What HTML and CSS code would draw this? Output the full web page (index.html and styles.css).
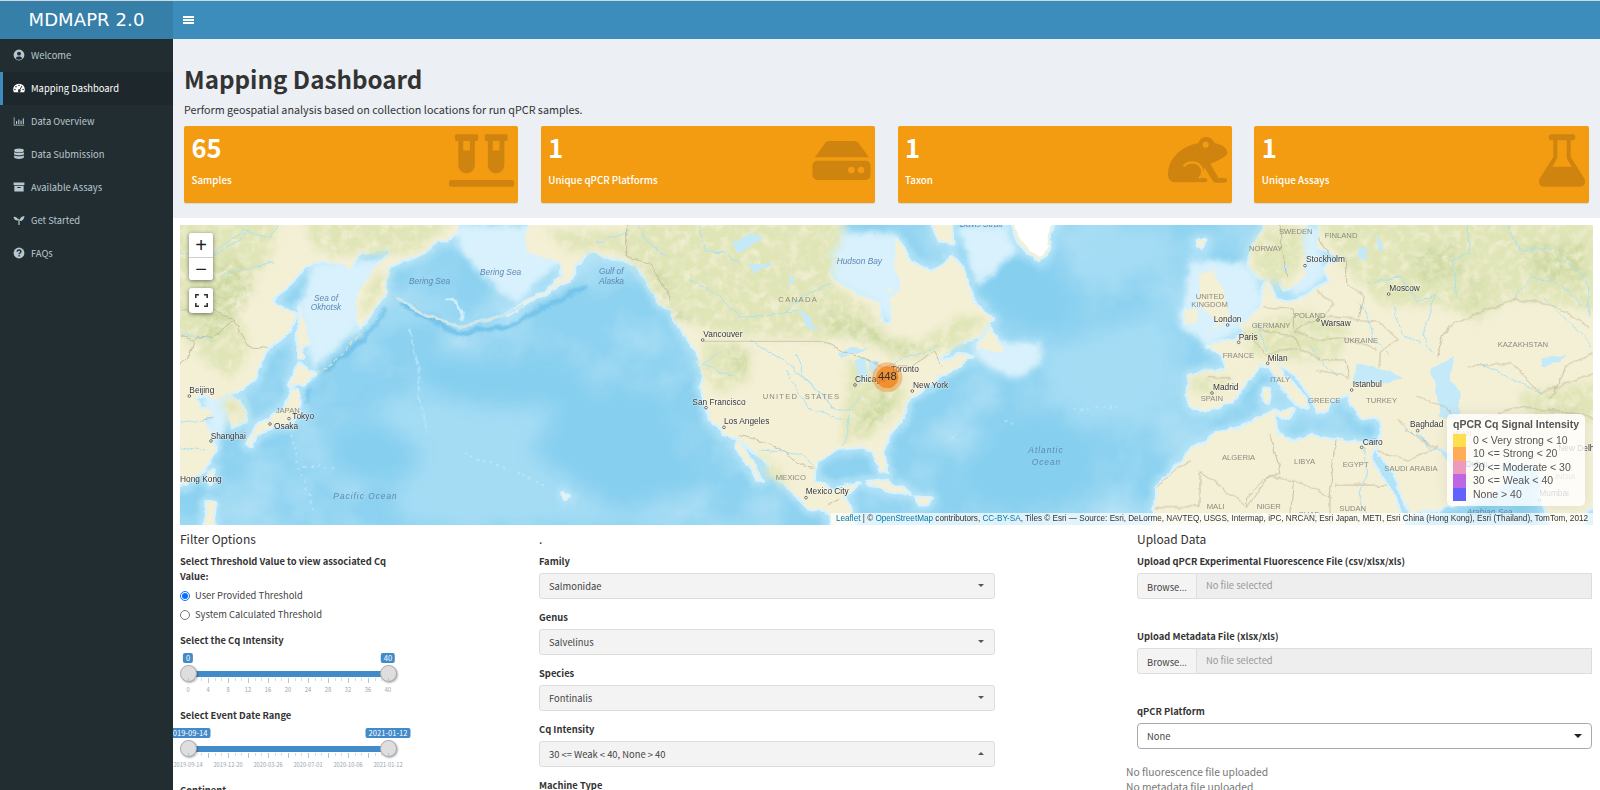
FILE: index.html
```html
<!DOCTYPE html>
<html lang="en">
<head>
<meta charset="utf-8">
<title>MDMAPR 2.0</title>
<link rel="stylesheet" href="styles.css">
</head>
<body>
<header class="topbar">
  <div class="logo">MDMAPR 2.0</div>
  <nav class="navbar">
    <svg class="burger" viewBox="0 0 11 8" width="11" height="8"><rect width="11" height="2" y="0"/><rect width="11" height="2" y="3"/><rect width="11" height="2" y="6"/></svg>
  </nav>
</header>
<div class="shell">
  <aside class="sidebar">
    <a class="side-item">
      <svg class="side-icon" viewBox="0 0 16 16"><path fill-rule="evenodd" d="M8 .8a7.2 7.2 0 1 0 0 14.400A7.200 7.200 0 0 0 8 .8zM8 3.600a2.600 2.600 0 1 1 0 5.200 2.600 2.600 0 0 1 0-5.200zM3.600 12.200C4.300 10.700 5.800 10 8 10s3.700.7 4.400 2.200A5.700 5.700 0 0 1 3.600 12.200z"/></svg>
      <span>Welcome</span></a>
    <a class="side-item active">
      <svg class="side-icon" viewBox="0 0 16 16"><path fill-rule="evenodd" d="M8 2.200A7.800 7.800 0 0 0 .2 10c0 1.400.4 2.700 1 3.800h13.600c.6-1.100 1-2.400 1-3.800A7.800 7.800 0 0 0 8 2.200zM8 3.600a1 1 0 1 1 0 2 1 1 0 0 1 0-2zM4 5.200a1 1 0 1 1 0 2 1 1 0 0 1 0-2zM2.600 9a1 1 0 1 1 0 2 1 1 0 0 1 0-2zM13.400 9a1 1 0 1 1 0 2 1 1 0 0 1 0-2zM11.500 5l.9.500-2.700 4.800a1.800 1.800 0 1 1-.9-.5z"/></svg>
      <span>Mapping Dashboard</span></a>
    <a class="side-item">
      <svg class="side-icon" viewBox="0 0 16 16"><path d="M1 3h1v10h13v1H1z"/><rect x="4" y="8" width="1.500" height="4"/><rect x="7" y="6" width="1.500" height="6"/><rect x="10" y="7.500" width="1.500" height="4.500"/><rect x="13" y="4.500" width="1.500" height="7.500"/></svg>
      <span>Data Overview</span></a>
    <a class="side-item">
      <svg class="side-icon" viewBox="0 0 16 16"><ellipse cx="8" cy="3.300" rx="6.500" ry="2.600"/><path d="M1.500 5.200C3 7 13 7 14.500 5.200v3C13 10 3 10 1.500 8.200z"/><path d="M1.500 9.700C3 11.500 13 11.500 14.500 9.700v3.100C13 15.300 3 15.300 1.500 12.800z"/></svg>
      <span>Data Submission</span></a>
    <a class="side-item">
      <svg class="side-icon" viewBox="0 0 16 16"><rect x=".8" y="2" width="14.400" height="3.400"/><path fill-rule="evenodd" d="M1.800 6.400h12.400V14H1.800zM5.800 8v1.200h4.400V8z"/></svg>
      <span>Available Assays</span></a>
    <a class="side-item">
      <svg class="side-icon" viewBox="0 0 16 16"><path d="M.8 3.500c3.500 0 6 1.600 6.400 5.200v5.800h1.600V8.700C9.300 5 11.500 2.700 15.200 2.500 15.200 6.500 13 9 9.300 9.300 9 7.900 8.500 7 7.500 6.100 6.800 8 6.400 8.700 6 8.700 2.900 8.700.8 6.500.8 3.500z"/></svg>
      <span>Get Started</span></a>
    <a class="side-item">
      <svg class="side-icon" viewBox="0 0 16 16"><circle cx="8" cy="8" r="7.200"/><path class="icon-cut" d="M5.500 6.300C5.600 4.800 6.700 4 8.100 4c1.500 0 2.500.9 2.500 2.100 0 1.800-2.500 1.900-2.500 3.500"/><circle class="icon-hole" cx="8.100" cy="11.800" r="1.100"/></svg>
      <span>FAQs</span></a>
  </aside>

  <main class="content">
    <section class="page-head">
      <h1 class="page-title">Mapping Dashboard</h1>
      <p class="page-sub">Perform geospatial analysis based on collection locations for run qPCR samples.</p>
      <div class="boxes">
        <div class="vbox">
          <div class="vnum">65</div><div class="vlabel">Samples</div>
          <svg class="vicon vicon-vials" viewBox="147 72 196 158"><path fill-rule="evenodd" d="M169 72h62a4 4 0 0 1 4 4v12a4 4 0 0 1-4 4h-6v73a25 25 0 0 1-50 0V92h-6a4 4 0 0 1-4-4V76a4 4 0 0 1 4-4zM190 92v29h20V92zM259 72h61a4 4 0 0 1 4 4v12a4 4 0 0 1-4 4h-6v73a25 25 0 0 1-50 0V92h-5a4 4 0 0 1-4-4V76a4 4 0 0 1 4-4zM279 92v29h20V92z"/><rect x="147" y="210" width="196" height="20" rx="5"/></svg>
        </div>
        <div class="vbox">
          <div class="vnum">1</div><div class="vlabel">Unique qPCR Platforms</div>
          <svg class="vicon vicon-hdd" viewBox="1237 92 176 118"><path d="M1288 92h76c6 0 11 3 14 8l30 41h-164l30-41c3-5 8-8 14-8z"/><path fill-rule="evenodd" d="M1252 152h146a15 15 0 0 1 15 15v28a15 15 0 0 1-15 15h-146a15 15 0 0 1-15-15v-28a15 15 0 0 1 15-15zM1355 170a10 10 0 1 0 0 20 10 10 0 0 0 0-20zM1384 170a10 10 0 1 0 0 20 10 10 0 0 0 0-20z"/></svg>
        </div>
        <div class="vbox">
          <div class="vnum">1</div><div class="vlabel">Taxon</div>
          <svg class="vicon vicon-frog" viewBox="207 82 180 138"><path fill-rule="evenodd" d="M298 100c4-12 14-18 24-18 11 0 20 7 25 18 22 5 38 15 38 30 0 10-26 22-51 33l25 42h17c11 0 11 14 0 14h-26c-4 0-6-2-8-4l-26-42c-2 14-8 24-17 32h18c11 0 11 13 0 13h-90c-12 0-20-9-20-24 0-50 43-85 91-94zM320 96a9 9 0 1 0 0 18 9 9 0 0 0 0-18z"/><path class="vcut" d="M254 170c13-17 44-17 54 6 4 12 0 24-8 30"/></svg>
        </div>
        <div class="vbox">
          <div class="vnum">1</div><div class="vlabel">Unique Assays</div>
          <svg class="vicon vicon-flask" viewBox="1317 72 138 158"><path fill-rule="evenodd" d="M1355 72h62a8 8 0 0 1 0 18h-5v50l39 62c10 14 2 28-12 28h-106c-14 0-22-14-12-28l39-62V90h-5a8 8 0 0 1 0-18zM1372 90v54l-15 26h58l-15-26V90z"/></svg>
        </div>
      </div>
    </section>

    <section class="panel">
      <div class="map">
        <svg class="map-svg" viewBox="180 225 1413 300" width="1413" height="300">
          <defs>
            <filter id="rough" filterUnits="userSpaceOnUse" x="150" y="195" width="1473" height="360">
              <feTurbulence type="fractalNoise" baseFrequency=".07" numOctaves="4" seed="7" result="n"/>
              <feDisplacementMap in="SourceGraphic" in2="n" scale="7" xChannelSelector="R" yChannelSelector="G"/>
              <feGaussianBlur stdDeviation=".35"/>
            </filter>
            <filter id="soft" filterUnits="userSpaceOnUse" x="150" y="195" width="1473" height="360"><feGaussianBlur stdDeviation="0.5"/></filter>
            <filter id="blur3" filterUnits="userSpaceOnUse" x="150" y="195" width="1473" height="360"><feGaussianBlur stdDeviation="3"/></filter>
            <filter id="blur6" filterUnits="userSpaceOnUse" x="150" y="195" width="1473" height="360"><feGaussianBlur stdDeviation="10"/></filter>
            <filter id="mott" filterUnits="userSpaceOnUse" x="150" y="195" width="1473" height="360">
              <feGaussianBlur in="SourceGraphic" stdDeviation="4" result="b"/>
              <feTurbulence type="fractalNoise" baseFrequency=".1" numOctaves="3" seed="4"/>
              <feColorMatrix type="matrix" values="0 0 0 0 0  0 0 0 0 0  0 0 0 0 0  2.200 0 0 0 -.2" result="n"/>
              <feComposite in="b" in2="n" operator="in"/>
            </filter>
            <filter id="mott2" filterUnits="userSpaceOnUse" x="150" y="195" width="1473" height="360">
              <feGaussianBlur in="SourceGraphic" stdDeviation="4" result="b"/>
              <feTurbulence type="fractalNoise" baseFrequency=".14" numOctaves="3" seed="9"/>
              <feColorMatrix type="matrix" values="0 0 0 0 0  0 0 0 0 0  0 0 0 0 0  2.400 0 0 0 -.7" result="n"/>
              <feComposite in="b" in2="n" operator="in"/>
            </filter>
            <filter id="clouds" filterUnits="userSpaceOnUse" x="180" y="225" width="1413" height="300">
              <feTurbulence type="fractalNoise" baseFrequency=".014" numOctaves="4" seed="11"/>
              <feColorMatrix type="matrix" values="0 0 0 0 .78  0 0 0 0 .92  0 0 0 0 .99  .9 0 0 0 -.34"/>
            </filter>
            <g id="land">
              <g transform="translate(170 220) scale(.33333)">
                <path d="M-40 -40L860 -40L865 45L800 65L750 105L700 118L662 140L640 180L650 215L610 270L572 322L560 290L562 225L590 170L640 125L668 88L620 82L565 105L540 140L480 125L430 125L385 160L345 205L305 240L335 262L375 285L360 330L320 370L290 385L250 480L215 505L165 530L130 540L105 520L70 535L95 565L135 572L100 600L125 640L130 690L105 750L50 790L-40 810Z"/>
                <path d="M170 535L210 545L228 600L190 618L172 570Z"/>
                <path d="M388 262L400 300L418 368L395 385L400 415L385 415L388 340Z"/>
                <path d="M380 435L410 455L438 460L405 490L375 490L360 500Z"/>
                <path d="M362 508L382 510L388 545L385 590L345 612L300 625L262 640L240 652L255 625L305 590L350 565Z"/>
                <path d="M240 655L255 650L245 680L232 672Z"/>
                <path d="M120 755L130 755L122 790L112 780Z"/>
                <path d="M110 845L135 850L130 890L150 960L105 960Z"/>
                <path d="M1178 822L1195 830L1188 842Z"/>
              </g>
              <g transform="translate(670 220) scale(.33333)">
                <path d="M-390 -40L-440 50L-430 90L-390 110L-330 130L-320 165L-370 210L-440 250L-490 285L-390 225L-310 180L-270 130L-250 95L-210 100L-160 115L-100 130L-60 190L-30 250L0 265L35 325L70 380L100 440L95 500L110 570L160 640L205 655L262 700L300 745L360 805L415 860L480 880L490 960L560 960L540 860L520 830L565 790L490 810L430 780L435 720L500 690L570 682L610 692L632 752L648 755L640 700L650 650L700 590L712 540L750 512L790 480L830 460L905 410L870 405L820 420L800 420L860 370L925 350L965 300L905 235L870 140L845 108L790 160L725 130L680 55L668 140L695 205L662 240L665 312L640 318L625 250L560 220L495 185L465 130L480 80L530 -40Z"/>
                <path d="M205 655L240 720L275 785L235 740L200 680Z"/>
                <path d="M770 -40L830 -40L850 70L810 60Z"/>
                <path d="M920 385L960 320L1000 400L965 390Z"/>
                <path d="M590 790L650 783L725 822L670 815L620 800Z"/>
                <path d="M740 830L785 835L770 850L745 845Z"/>
                <path d="M650 205L670 205L665 222Z"/>
                <path d="M1012 -40L1045 70L1110 125L1125 100L1165 -40Z"/>
              </g>
              <g transform="translate(1150 220) scale(.33333)">
                <path d="M385 -40L340 40L300 85L300 130L320 170L350 175L385 165L405 205L445 190L470 170L460 110L455 50L480 -40L510 -40L510 50L505 80L560 105L620 110L540 130L520 150L545 185L500 205L460 235L420 245L390 250L370 230L355 180L340 190L340 240L330 260L290 300L270 315L285 340L250 360L175 375L215 400L225 450L120 465L115 555L170 575L240 545L285 490L335 430L360 440L400 500L445 555L470 560L460 525L400 470L385 425L440 470L480 520L500 575L530 570L540 540L600 520L600 555L640 590L700 600L685 695L730 760L780 880L785 885L890 860L1000 830L1080 775L1045 735L970 750L900 735L855 680L920 715L1020 725L1150 730L1180 780L1170 830L1220 960L1300 960L1305 870L1400 840L1400 -40Z"/>
                <path d="M150 165L195 150L210 190L240 290L170 340L200 310L145 250Z"/>
                <path d="M105 265L145 270L140 310L105 310Z"/>
                <path d="M140 58L165 58L160 85L145 80Z"/>
                <path d="M345 510L360 510L355 545L345 540Z"/>
                <path d="M375 580L430 570L420 600Z"/>
              </g>
              <g transform="translate(1100 400) scale(.33333)">
                <path d="M160 420L170 265L232 200L275 150L360 100L450 75L490 45L525 35L530 95L580 130L640 105L700 120L780 130L830 135L810 170L870 270L905 345L925 420Z"/>
              </g>
            </g>
          </defs>

          <rect class="ocean" x="180" y="225" width="1413" height="300"/>
          <rect class="clouds" x="180" y="225" width="1413" height="300" filter="url(#clouds)"/>

          <g filter="url(#rough)">
          <g class="depth" filter="url(#blur6)">
            <g transform="translate(170 220) scale(.33333)">
              <path class="d-light" d="M620 560L900 500L1300 620L1500 560L1500 915L700 915Z"/>
              <path class="d-deep" d="M720 380L1000 430L1240 430L1280 560L950 560L760 520Z"/>
              <path class="d-deep" d="M450 620L650 610L760 700L700 790L500 770Z"/>
            </g>
            <g transform="translate(670 220) scale(.33333)">
              <path class="d-deep" d="M900 40L1080 60L1240 250L1180 360L1020 300L900 200Z"/>
              <path class="d-deep" d="M1000 580L1250 620L1300 800L1000 880L850 780Z"/>
              <path class="d-light" d="M1100 400L1500 260L1500 560L1250 620L1150 520Z"/>
              <path class="d-light" d="M1180 20L1500 20L1500 130L1260 200Z"/>
              <path class="d-deep" d="M-300 500L0 540L80 800L-150 880L-420 700Z"/>
            </g>
          </g>
          <g class="trench" filter="url(#blur3)" transform="translate(170 220) scale(.33333)">
            <path d="M650 262L590 345L420 495L395 620L395 760"/>
            <path d="M690 250L860 340L1010 320L1250 200"/>
          </g>
          <use class="shelf-a" href="#land" filter="url(#blur3)"/>
          <g class="shelf-fill" filter="url(#blur3)">
            <g transform="translate(170 220) scale(.33333)">
              <path d="M430 130L640 120L570 320L430 450L385 260Z"/>
              <path d="M860 15L1110 15L1170 130L1040 250L960 190L880 110L860 60Z"/>
              <path d="M100 530L190 510L160 640L130 690Z"/>
            </g>
            <g transform="translate(670 220) scale(.33333)">
              <path d="M465 130L480 30L680 40L700 200L660 320L620 250L500 190Z"/>
              <path d="M900 370L1115 365L1115 430L1040 480L930 430Z"/>
              <path d="M860 15L1010 15L1040 100L920 200Z"/>
            </g>
            <g transform="translate(1150 220) scale(.33333)">
              <path d="M120 120L300 130L345 240L270 330L180 380L90 320Z"/>
              <path d="M460 20L510 20L520 180L440 230L420 200Z"/>
            </g>
          </g>
          <use class="shelf-b" href="#land" filter="url(#soft)"/>
          <use class="land-base" href="#land"/>

          <g class="green" filter="url(#mott)">
            <g transform="translate(170 220) scale(.33333)">
              <path d="M-10 -10L330 -10L300 120L180 250L230 340L240 400L180 480L100 420L-10 300Z"/>
              <path d="M150 530L210 550L220 600L180 610Z"/>
              <path d="M1370 -10L1500 -10L1500 220L1400 130Z"/>
              <path d="M400 -10L860 -10L740 100L660 100L560 100L500 110L430 90Z"/>
              <path d="M600 180L650 150L640 210L590 280L570 280Z"/>
            </g>
            <g transform="translate(670 220) scale(.33333)">
              <path d="M0 -10L530 -10L480 190L600 270L640 340L750 370L870 280L960 300L860 380L700 420L560 350L450 360L250 350L100 330L40 280L-60 190Z"/>
              <path d="M530 420L700 470L700 560L600 650L510 670L530 520Z"/>
              <path d="M100 360L240 390L240 480L150 520L100 470Z"/>
              <path d="M260 690L330 750L360 810L300 770Z"/>
              <path d="M-380 30L-100 30L-60 150L-180 90L-300 100Z"/>
            </g>
            <g transform="translate(1150 220) scale(.33333)">
              <path d="M500 -10L1350 -10L1350 280L1100 230L980 300L880 260L700 260L600 160L560 110Z"/>
              <path d="M280 330L450 270L600 320L560 420L400 420L300 400Z"/>
              <path d="M300 90L380 -10L460 30L460 130L400 200L330 170Z"/>
              <path d="M1100 520L1350 480L1350 600L1150 600Z"/>
              <path d="M120 470L250 470L200 520L130 520Z"/>
            </g>
          </g>
          <g class="green-dark" filter="url(#mott2)">
            <g transform="translate(170 220) scale(.33333)">
              <path d="M100 150L200 100L260 200L190 300L120 380L90 280Z"/>
              <path d="M1420 130L1500 170L1500 230L1450 190Z"/>
            </g>
            <g transform="translate(670 220) scale(.33333)">
              <path d="M460 260L620 320L650 370L780 380L700 410L560 350L470 330Z"/>
              <path d="M170 370L240 400L230 470L180 450Z"/>
              <path d="M560 580L660 500L670 570L580 640Z"/>
              <path d="M-60 200L30 260L80 300L30 310Z"/>
            </g>
            <g transform="translate(1150 220) scale(.33333)">
              <path d="M960 170L1000 180L990 270L965 310Z"/>
              <path d="M760 110L900 60L940 150L840 200Z"/>
              <path d="M1120 80L1300 60L1310 200L1160 180Z"/>
            </g>
          </g>
          <g class="ice" transform="translate(670 220) scale(.33333)">
            <path d="M1020 -40L1050 62L1108 112L1120 96L1165 -40Z"/>
          </g>

          <g class="water">
            <g transform="translate(670 220) scale(.33333)">
              <path d="M500 400L545 385L600 385L555 400L510 415Z"/>
              <path d="M555 425L590 410L590 470L570 490Z"/>
              <path d="M595 415L625 425L615 465L600 455Z"/>
              <path d="M385 265L420 285L440 335L410 320Z"/>
              <path d="M185 65L250 40L280 55L205 100Z"/>
              <path d="M230 135L310 130L250 160Z"/>
              <path d="M360 170L375 170L355 205Z"/>
            </g>
            <g transform="translate(1150 220) scale(.33333)">
              <path d="M620 430L680 440L760 475L720 490L610 490Z"/>
              <path d="M840 440L915 410L900 470L925 510L930 600L870 590L860 520Z"/>
              <path d="M1175 415L1250 405L1230 425L1180 440Z"/>
              <path d="M620 85L655 75L650 120L625 115Z"/>
              <path d="M675 45L700 85L680 90Z"/>
              <path d="M395 140L415 135L410 160Z"/>
            </g>
            <g transform="translate(1100 400) scale(.33333)">
              <path d="M1000 140L1050 170L1105 210L1060 200Z"/>
            </g>
          </g>

          <g class="rivers">
            <g transform="translate(170 220) scale(.33333)">
              <path d="M130 100L220 30L300 55L330 15"/>
              <path d="M145 170L250 140L310 125"/>
              <path d="M30 100L140 105L240 35"/>
              <path d="M30 340L130 360"/>
              <path d="M30 680L100 690M30 610L100 600"/>
              <path d="M1400 15L1440 80L1500 110"/>
              <path d="M1380 30L1280 70"/>
            </g>
            <g transform="translate(670 220) scale(.33333)">
              <path d="M240 360L340 420L420 490L500 570L540 570L575 530"/>
              <path d="M380 400L400 470L500 570"/>
              <path d="M540 580L530 650L520 680"/>
              <path d="M60 180L130 215L210 290L280 290L385 270"/>
              <path d="M640 440L800 380"/>
              <path d="M350 450L410 560L520 600"/>
              <path d="M90 20L110 100L170 100L210 130"/>
              <path d="M480 190L400 230L340 280"/>
              <path d="M270 690L390 700L430 740"/>
              <path d="M140 400L100 430L190 470"/>
            </g>
            <g transform="translate(1150 220) scale(.33333)">
              <path d="M950 15L960 100L910 120L920 230"/>
              <path d="M1070 15L1110 90L1210 90L1310 180L1320 290"/>
              <path d="M650 190L750 170L800 240L860 230L815 350L850 400"/>
              <path d="M625 250L660 300L670 360L720 400"/>
              <path d="M730 260L760 340L810 370"/>
              <path d="M1090 240L1140 170L1230 190L1300 260"/>
              <path d="M990 430L1100 480L1170 520"/>
              <path d="M1180 230L1230 280L1330 380"/>
              <path d="M320 310L350 390M480 380L560 470"/>
            </g>
            <g transform="translate(1100 400) scale(.33333)">
              <path d="M790 140L800 220L780 280L800 340L790 375"/>
              <path d="M920 90L985 130M950 100L1000 150"/>
            </g>
          </g>

          <g class="borders">
            <g transform="translate(170 220) scale(.33333)">
              <path d="M1370 15L1370 110L1440 130L1500 240"/>
              <path d="M30 270L130 270L190 300L240 380L290 385"/>
              <path d="M30 345L70 360L50 420L30 435"/>
              <path d="M100 600L130 595M70 355L130 350L190 300"/>
            </g>
            <g transform="translate(670 220) scale(.33333)">
              <path d="M205 650L280 665L340 690L400 740L430 745"/>
              <path d="M470 860L510 840"/>
              <path d="M460 362L520 395L600 420L640 440L720 440L790 395L815 440"/>
            </g>
            <g transform="translate(1150 220) scale(.33333)">
              <path d="M890 320L1100 235L1220 260L1320 320"/>
              <path d="M860 410L890 320"/>
              <path d="M950 440L1080 430L1170 520L1330 460"/>
              <path d="M520 290L680 300L745 360L690 400L690 440"/>
              <path d="M430 330L520 290L550 250L500 210"/>
              <path d="M340 260L430 270L430 330L500 360L570 350L680 390"/>
              <path d="M330 330L430 345L450 390L520 420L590 420L600 470L500 450"/>
              <path d="M285 340L320 370L345 400L440 390"/>
              <path d="M170 470L240 470"/>
              <path d="M590 110L590 190L640 230L625 290"/>
              <path d="M510 50L540 110M385 15L395 70L410 170"/>
              <path d="M800 530L880 560L930 610L1020 590L1120 560L1330 590"/>
              <path d="M1330 400L1250 440L1200 540"/>
              <path d="M740 600L810 660L860 680"/>
            </g>
            <g transform="translate(1100 400) scale(.33333)">
              <path d="M275 185L235 200L170 265"/>
              <path d="M300 215L440 320L510 225L540 220L510 100"/>
              <path d="M300 215L300 320L170 320"/>
              <path d="M440 320L440 290L510 225"/>
              <path d="M580 240L690 290L705 120"/>
              <path d="M705 255L860 255"/>
              <path d="M510 225L580 240L570 375"/>
              <path d="M690 290L690 375"/>
              <path d="M835 155L930 180L1010 140"/>
              <path d="M1050 195L1190 310"/>
            </g>
          </g>

          <g class="specks" filter="url(#soft)">
            <g transform="translate(170 220) scale(.33333)">
              <path class="sp-shallow" d="M680 232C720 262 780 300 860 318C930 315 1000 290 1060 255"/>
              <path class="sp-tan" d="M680 232C720 262 780 300 860 318C930 315 1000 290 1060 255"/>
              <path class="sp-tan" d="M440 460L500 420L570 340"/>
              <path class="sp-white" d="M716 330L745 440L750 520L760 590L770 640"/>
              <path class="sp-white2" d="M880 700L1000 745L1130 800"/>
              <path class="sp-white2" d="M360 640L390 760L440 880M400 740L500 745"/>
              <path class="sp-eddy" d="M825 240C870 235 885 270 872 300"/>
            </g>
            <g transform="translate(670 220) scale(.33333)">
              <path class="sp-white2" d="M1000 600L1030 610M1210 570L1350 560M840 650L860 640"/>
            </g>
          </g>
          </g>

          <g class="line-straight" transform="translate(670 220) scale(.33333)">
            <path d="M100 364L460 364"/>
          </g>

          <g class="labels">
            <g transform="translate(170 220) scale(.33333)">
              <text class="sea" x="717" y="191">Bering Sea</text>
              <text class="sea" x="930" y="165">Bering Sea</text>
              <text class="sea" x="1287" y="163">Gulf of</text>
              <text class="sea" x="1287" y="191">Alaska</text>
              <text class="sea" x="432" y="242">Sea of</text>
              <text class="sea" x="422" y="269">Okhotsk</text>
              <text class="sea wide" x="490" y="837">Pacific Ocean</text>
              <text class="country" x="317" y="579">JAPAN</text>
              <text class="city" x="58" y="519">Beijing</text><circle class="dot" cx="58" cy="528" r="4"/>
              <text class="city" x="367" y="598">Tokyo</text><circle class="dot" cx="357" cy="596" r="4"/>
              <text class="city" x="312" y="627">Osaka</text><circle class="dot" cx="300" cy="612" r="4"/>
              <text class="city" x="122" y="656">Shanghai</text><circle class="dot" cx="123" cy="663" r="4"/>
              <text class="city" x="30" y="785">Hong Kong</text>
            </g>
            <g transform="translate(670 220) scale(.33333)">
              <text class="sea" x="500" y="131">Hudson Bay</text>
              <text class="sea" x="870" y="20">Davis Strait</text>
              <text class="country wide2" x="325" y="246">CANADA</text>
              <text class="country wide3" x="278" y="536">UNITED  STATES</text>
              <text class="country" x="317" y="779">MEXICO</text>
              <text class="city" x="100" y="350">Vancouver</text><circle class="dot" cx="98" cy="360" r="4"/>
              <text class="city" x="555" y="486">Chicago</text><circle class="dot" cx="555" cy="495" r="4"/>
              <text class="city" x="663" y="456">Toronto</text>
              <text class="city" x="729" y="505">New York</text><circle class="dot" cx="727" cy="513" r="4"/>
              <text class="city" x="67" y="554">San Francisco</text><circle class="dot" cx="108" cy="563" r="4"/>
              <text class="city" x="162" y="613">Los Angeles</text><circle class="dot" cx="162" cy="622" r="4"/>
              <text class="city" x="407" y="822">Mexico City</text><circle class="dot" cx="408" cy="833" r="4"/>
              <text class="sea wide" x="1075" y="698">Atlantic</text>
              <text class="sea wide" x="1085" y="736">Ocean</text>
              <circle class="cluster-out" cx="652" cy="472" r="45"/>
              <circle class="cluster-in" cx="652" cy="472" r="33"/>
              <text class="cluster-text" x="652" y="481">448</text>
            </g>
            <g transform="translate(1150 220) scale(.33333)">
              <text class="country" x="387" y="41">SWEDEN</text>
              <text class="country" x="524" y="55">FINLAND</text>
              <text class="country" x="297" y="93">NORWAY</text>
              <text class="country" x="137" y="237">UNITED</text>
              <text class="country" x="124" y="262">KINGDOM</text>
              <text class="country" x="432" y="293">POLAND</text>
              <text class="country" x="305" y="323">GERMANY</text>
              <text class="country" x="582" y="368">UKRAINE</text>
              <text class="country" x="1043" y="381">KAZAKHSTAN</text>
              <text class="country" x="218" y="415">FRANCE</text>
              <text class="country" x="360" y="485">ITALY</text>
              <text class="country" x="152" y="543">SPAIN</text>
              <text class="country" x="474" y="549">GREECE</text>
              <text class="country" x="648" y="550">TURKEY</text>
              <text class="city" x="468" y="127">Stockholm</text><circle class="dot" cx="465" cy="137" r="4"/>
              <text class="city" x="718" y="213">Moscow</text><circle class="dot" cx="716" cy="222" r="4"/>
              <text class="city" x="191" y="306">London</text><circle class="dot" cx="233" cy="315" r="4"/>
              <text class="city" x="513" y="319">Warsaw</text><circle class="dot" cx="504" cy="300" r="4"/>
              <text class="city" x="266" y="359">Paris</text><circle class="dot" cx="266" cy="367" r="4"/>
              <text class="city" x="353" y="422">Milan</text><circle class="dot" cx="353" cy="430" r="4"/>
              <text class="city" x="189" y="510">Madrid</text><circle class="dot" cx="186" cy="519" r="4"/>
              <text class="city" x="608" y="501">Istanbul</text><circle class="dot" cx="605" cy="510" r="4"/>
            </g>
            <g transform="translate(1100 400) scale(.33333)">
              <text class="country" x="366" y="179">ALGERIA</text>
              <text class="country" x="582" y="192">LIBYA</text>
              <text class="country" x="728" y="201">EGYPT</text>
              <text class="country" x="853" y="212">SAUDI ARABIA</text>
              <text class="country" x="320" y="326">MALI</text>
              <text class="country" x="470" y="326">NIGER</text>
              <text class="country" x="718" y="334">SUDAN</text>
              <text class="country" x="595" y="352">CHAD</text>
              <text class="country" x="1060" y="107">IRAN</text>
              <text class="country" x="1365" y="237">INDIA</text>
              <text class="city" x="930" y="82">Baghdad</text><circle class="dot" cx="953" cy="92" r="4"/>
              <text class="city" x="788" y="134">Cairo</text><circle class="dot" cx="785" cy="142" r="4"/>
              <text class="city" x="1097" y="201">Dubai</text>
              <text class="city" x="1375" y="153">New Delhi</text>
              <text class="city" x="1318" y="289">Mumbai</text><circle class="dot" cx="1318" cy="300" r="4"/>
              <text class="sea" x="1100" y="346">Arabian Sea</text>
            </g>
          </g>
        </svg>

        <div class="zoomctl">
          <button class="zbtn">+</button>
          <button class="zbtn">−</button>
        </div>
        <div class="fullscreen">
          <svg viewBox="0 0 13 13" width="13" height="13"><path d="M.8 4V.8H4M9 .8h3.200V4M12.200 9v3.200H9M4 12.200H.8V9"/></svg>
        </div>

        <div class="legend">
          <div class="legend-title">qPCR Cq Signal Intensity</div>
          <div class="legend-row"><i class="sw sw-1"></i>0 &lt; Very strong &lt; 10</div>
          <div class="legend-row"><i class="sw sw-2"></i>10 &lt;= Strong &lt; 20</div>
          <div class="legend-row"><i class="sw sw-3"></i>20 &lt;= Moderate &lt; 30</div>
          <div class="legend-row"><i class="sw sw-4"></i>30 &lt;= Weak &lt; 40</div>
          <div class="legend-row"><i class="sw sw-5"></i>None &gt; 40</div>
        </div>
        <div class="attrib"><a>Leaflet</a> | © <a>OpenStreetMap</a> contributors, <a>CC-BY-SA</a>, Tiles © Esri — Source: Esri, DeLorme, NAVTEQ, USGS, Intermap, iPC, NRCAN, Esri Japan, METI, Esri China (Hong Kong), Esri (Thailand), TomTom, 2012</div>
      </div>

      <div class="cols">
        <div class="col">
          <h4 class="col-title">Filter Options</h4>
          <label class="lbl lbl-wrap">Select Threshold Value to view associated Cq Value:</label>
          <label class="radio-row"><input type="radio" name="thr" checked>User Provided Threshold</label>
          <label class="radio-row"><input type="radio" name="thr">System Calculated Threshold</label>
          <label class="lbl lbl-slider">Select the Cq Intensity</label>
          <div class="slider">
            <span class="tag tag-l">0</span><span class="tag tag-r">40</span>
            <div class="bar"></div><div class="knob knob-l"></div><div class="knob knob-r"></div>
            <div class="ticks"></div>
            <div class="grid-text"><span>0</span><span>4</span><span>8</span><span>12</span><span>16</span><span>20</span><span>24</span><span>28</span><span>32</span><span>36</span><span>40</span></div>
          </div>
          <label class="lbl lbl-slider">Select Event Date Range</label>
          <div class="slider">
            <span class="tag tag-l">2019-09-14</span><span class="tag tag-r">2021-01-12</span>
            <div class="bar"></div><div class="knob knob-l"></div><div class="knob knob-r"></div>
            <div class="ticks"></div>
            <div class="grid-text"><span>2019-09-14</span><span>2019-12-20</span><span>2020-03-26</span><span>2020-07-01</span><span>2020-10-06</span><span>2021-01-12</span></div>
          </div>
          <label class="lbl lbl-slider">Continent</label>
        </div>

        <div class="col">
          <h4 class="col-title col-dot">.</h4>
          <div class="field"><label class="lbl">Family</label><div class="sel">Salmonidae<b class="caret"></b></div></div>
          <div class="field"><label class="lbl">Genus</label><div class="sel">Salvelinus<b class="caret"></b></div></div>
          <div class="field"><label class="lbl">Species</label><div class="sel">Fontinalis<b class="caret"></b></div></div>
          <div class="field"><label class="lbl">Cq Intensity</label><div class="sel">30 &lt;= Weak &lt; 40, None &gt; 40<b class="caret caret-up"></b></div></div>
          <div class="field"><label class="lbl">Machine Type</label></div>
        </div>

        <div class="col">
          <h4 class="col-title">Upload Data</h4>
          <div class="field-up"><label class="lbl">Upload qPCR Experimental Fluorescence File (csv/xlsx/xls)</label>
            <div class="file"><span class="browse">Browse...</span><span class="file-name">No file selected</span></div></div>
          <div class="field-up"><label class="lbl">Upload Metadata File (xlsx/xls)</label>
            <div class="file"><span class="browse">Browse...</span><span class="file-name">No file selected</span></div></div>
          <div class="field-plat"><label class="lbl">qPCR Platform</label>
            <div class="sel sel-white">None<b class="caret caret-big"></b></div></div>
          <div class="msgs"><div>No fluorescence file uploaded</div><div>No metadata file uploaded</div></div>
        </div>
      </div>
    </section>
  </main>
</div>
</body>
</html>
```
FILE: styles.css
```css
* { box-sizing: border-box; }
html, body { margin: 0; height: 790px; overflow: hidden; }
body {
  font-family: "Noto Sans CJK JP", "Noto Sans", sans-serif;
  font-size: 9.400px;
  line-height: 15px;
  color: #333;
  background: #fff;
}

/* top bar */
.topbar { display: flex; height: 39px; border-top: 1px solid #cfd8de; }
.logo {
  width: 173px; background: #367fa9; color: #fff;
  font: 18px/38px "DejaVu Sans", sans-serif; letter-spacing: .1px;
  text-align: center;
}
.navbar { flex: 1; background: #3c8dbc; display: flex; align-items: center; padding-left: 10px; }
.burger { fill: #fff; }

.shell { display: flex; height: 751px; }

/* sidebar */
.sidebar { width: 173px; flex: none; background: #222d32; position: relative; z-index: 2; }
.side-item {
  display: flex; align-items: center; height: 33px; color: #b8c7ce; padding: 0 0 1px 13px;
  font-size: 9.400px;
}
.side-item.active { background: #1e282c; color: #fff; box-shadow: inset 3px 0 0 #3c8dbc; }
.side-icon { width: 12px; height: 12px; fill: currentColor; margin-right: 6px; flex: none; }
.icon-cut { fill: none; stroke: #222d32; stroke-width: 1.9; }
.icon-hole { fill: #222d32; }

/* content */
.content { flex: 1; min-width: 0; }
.page-head { background: #ecf0f5; height: 179px; padding: 24px 11px 0; }
.page-title { margin: 0; font-size: 24.200px; line-height: 32px; font-weight: 700; color: #333; }
.page-sub { margin: 7px 0 0; line-height: 16px; font-size: 10.760px; color: #333; }
.boxes { display: grid; grid-template-columns: repeat(4, 334.400px); column-gap: 22.400px; margin-top: 8px; }
.vbox {
  position: relative; height: 77px; background: #f39c12; color: #fff; border-radius: 2px;
  box-shadow: 0 1px 1px rgba(0,0,0,.1); padding: 5px 7.500px;
}
.vnum { font-size: 25.500px; line-height: 32px; font-weight: 700; }
.vlabel { margin-top: 10px; line-height: 15px; font-size: 9.800px; font-weight: 500; }
.vicon { position: absolute; right: 4px; fill: rgba(0,0,0,.15); }
.vicon-vials { top: 8px; width: 65px; height: 53px; }
.vicon-hdd { top: 15px; width: 59px; height: 39px; }
.vicon-frog { top: 11px; width: 60px; height: 46px; }
.vicon-flask { top: 8px; width: 46px; height: 53px; }
.vcut { fill: none; stroke: #f39c12; stroke-width: 7; }

/* panel + map */
.panel { background: #fff; padding: 7px 7px 0; }
.map { position: relative; width: 1413px; height: 300px; overflow: hidden; }
.map-svg { display: block; }
.ocean { fill: #8dd2f0; }
.d-light { fill: #a4dcf4; }
.d-deep { fill: #86cfef; }
.trench path { fill: none; stroke: #74c3ea; stroke-width: 14; }
.shelf-a { fill: #b3e3f7; stroke: #b3e3f7; stroke-width: 40; stroke-linejoin: round; }
.shelf-fill path { fill: #d8f1fc; }
.shelf-b { fill: #d8f1fc; stroke: #d8f1fc; stroke-width: 14; stroke-linejoin: round; }
.land-base { fill: #f4f0d6; }
.green path { fill: #e0e5b8; }
.green-dark path { fill: #c3d39a; opacity: .7; }
.ice path { fill: #fff; }
.water path { fill: #c4e9f9; }
.rivers path { fill: none; stroke: #a9dff5; stroke-width: 3; opacity: .95; }
.borders path { fill: none; stroke: #bcb39c; stroke-width: 2.300; }
.line-straight path { fill: none; stroke: #bcb39c; stroke-width: 2; }
.specks path { fill: none; }
.sp-shallow { stroke: #c4e9f9; stroke-width: 8; }
.sp-tan { stroke: #e9dfbc; stroke-width: 4; stroke-dasharray: 12 10; }
.sp-white { stroke: #b8e6f8; stroke-width: 7; stroke-dasharray: 22 6; opacity: .7; }
.sp-white2 { stroke: #c8ecfa; stroke-width: 5; stroke-dasharray: 8 13; opacity: .65; }
.sp-eddy { stroke: #cbeefb; stroke-width: 9; }
.labels text { font-family: "Liberation Sans", Arial, sans-serif; }
.sea { font-size: 25px; font-style: italic; fill: #6088b4; }
.wide { letter-spacing: 3px; }
.country { font-size: 23px; fill: #8d8a82; }
.wide2 { letter-spacing: 4px; }
.wide3 { letter-spacing: 3.500px; white-space: pre; }
.city {
  font-size: 25px; fill: #333; paint-order: stroke;
  stroke: rgba(255,255,255,.55); stroke-width: 3px;
}
.dot { fill: #fff; stroke: #333; stroke-width: 2; }
.cluster-out { fill: rgba(241,128,23,.4); stroke: rgba(241,200,170,.5); }
.cluster-in { fill: rgba(241,128,23,.75); }
.cluster-text { font-size: 34px; fill: #333; text-anchor: middle; }

.zoomctl {
  position: absolute; left: 9px; top: 8px; width: 24px; background: #fff;
  border-radius: 3px; box-shadow: 0 1px 4px rgba(0,0,0,.5); overflow: hidden;
}
.zbtn {
  display: block; width: 24px; height: 23.500px; padding: 0; border: 0; background: #fff;
  font: 400 20px/22px "Liberation Sans", sans-serif; color: #222; text-align: center;
}
.zbtn + .zbtn { border-top: 1px solid #ccc; }
.fullscreen {
  position: absolute; left: 9px; top: 63px; width: 24px; height: 25px; background: #fff;
  border-radius: 3px; box-shadow: 0 1px 4px rgba(0,0,0,.5);
  display: flex; align-items: center; justify-content: center;
}
.fullscreen svg { fill: none; stroke: #333; stroke-width: 1.600; }

.legend {
  position: absolute; left: 1267px; top: 189px; width: 138px; height: 92px;
  background: rgba(255,255,255,.8); border-radius: 5px; padding: 3px 6px;
  box-shadow: 0 0 15px rgba(0,0,0,.08);
  font: 10.500px/13.400px "Liberation Sans", sans-serif; color: #555;
}
.legend-title { font-weight: 700; height: 17px; line-height: 15px; white-space: nowrap; }
.legend-row { display: flex; height: 13.400px; align-items: center; white-space: nowrap; }
.sw { width: 13px; height: 13.400px; margin-right: 7px; flex: none; opacity: .85; }
.sw-1 { background: #ffd92f; }
.sw-2 { background: #ff9e3b; }
.sw-3 { background: #ea8ab3; }
.sw-4 { background: #b44be0; }
.sw-5 { background: #4747ff; }

.attrib {
  position: absolute; right: 0; bottom: 0; height: 12px; padding: 0 5px;
  background: rgba(255,255,255,.7); color: #333; white-space: nowrap;
  font: 8.170px/12px "Liberation Sans", sans-serif;
}
.attrib a { color: #0078a8; }

/* form columns */
.cols { display: grid; grid-template-columns: 359px 598px 456px; padding-top: 6px; }
.col { min-width: 0; }
.col-title { margin: 0 0 6px; height: 18px; font-size: 12px; line-height: 15px; font-weight: 400; color: #333; }
.lbl { display: block; height: 15px; font-weight: 700; line-height: 13px; font-size: 9.400px; color: #333; white-space: nowrap; }
.lbl-wrap { width: 225px; height: 32px; line-height: 15px; margin-top: -1px; white-space: normal; }
.radio-row { display: flex; align-items: center; height: 19px; font-size: 9.400px; color: #444; }
.radio-row input { width: 10px; height: 10px; margin: 0 5px 0 0; accent-color: #0a6cff; }
.lbl-slider { margin-top: 11px; }
.radio-row + .lbl-slider { margin-top: 10px; }

.slider { position: relative; width: 217px; height: 46px; margin-top: 2px; }
.slider + .lbl-slider { margin-top: 12px; }
.bar { position: absolute; left: 8px; right: 9px; top: 20px; height: 6px; background: #428bca; }
.knob {
  position: absolute; top: 14px; width: 17px; height: 17px; border-radius: 50%;
  background: #dedede; border: 1px solid #aaa; box-shadow: 1px 1px 2px rgba(0,0,0,.3);
}
.knob-l { left: 0; }
.knob-r { left: 200px; }
.tag {
  position: absolute; top: 2px; height: 10px; padding: 0 3px; border-radius: 2px; background: #428bca;
  color: #fff; font-size: 7.600px; line-height: 9px; white-space: nowrap; transform: translateX(-50%);
}
.tag-l { left: 8px; }
.tag-r { left: 208px; }
.ticks {
  position: absolute; left: 8px; top: 27px; width: 201px; height: 5px;
  background:
    repeating-linear-gradient(to right, #a8c8e4 0 1px, transparent 1px 20px) 0 0 / 100% 5px no-repeat,
    repeating-linear-gradient(to right, #cfdcea 0 1px, transparent 1px 6.670px) 0 0 / 100% 3px no-repeat;
}
.grid-text {
  position: absolute; left: 8px; width: 200px; top: 34px; display: flex; justify-content: space-between;
  font-size: 5.700px; line-height: 10px; color: #99a3ad;
}
.grid-text span { width: 0; display: flex; justify-content: center; white-space: nowrap; }

.field { margin-bottom: 12px; width: 456px; }
.sel {
  position: relative; height: 26px; margin-top: 3px; background: #f3f3f3; border: 1px solid #ddd;
  border-radius: 3px; padding-left: 9px; line-height: 24px; font-size: 9.400px; color: #444;
}
.caret {
  position: absolute; right: 10px; top: 10px; width: 0; height: 0;
  border: 3.500px solid transparent; border-top: 3.500px solid #555; border-bottom: 0;
}
.caret-up { border-top: 0; border-bottom: 3.500px solid #555; }
.sel-white { background: #fff; border: 1px solid #aaa; border-radius: 4px; }
.caret-big { right: 9px; border-width: 4.500px; border-bottom: 0; border-top-color: #222; }

.field-up { margin-bottom: 31px; width: 455px; }
.file { display: flex; height: 26px; margin-top: 3px; }
.browse {
  width: 60px; flex: none; background: #f4f4f4; border: 1px solid #ddd; border-radius: 3px 0 0 3px;
  text-align: center; line-height: 26px; color: #444; font-size: 9.300px;
}
.file-name {
  flex: 1; background: #eee; border: 1px solid #ddd; border-left: 0; padding-left: 9px;
  line-height: 22px; color: #999; font-size: 9.400px;
}
.field-plat { width: 455px; }
.msgs { margin: 15px 0 0 -11px; color: #777; line-height: 15px; font-size: 10.300px; }
```
